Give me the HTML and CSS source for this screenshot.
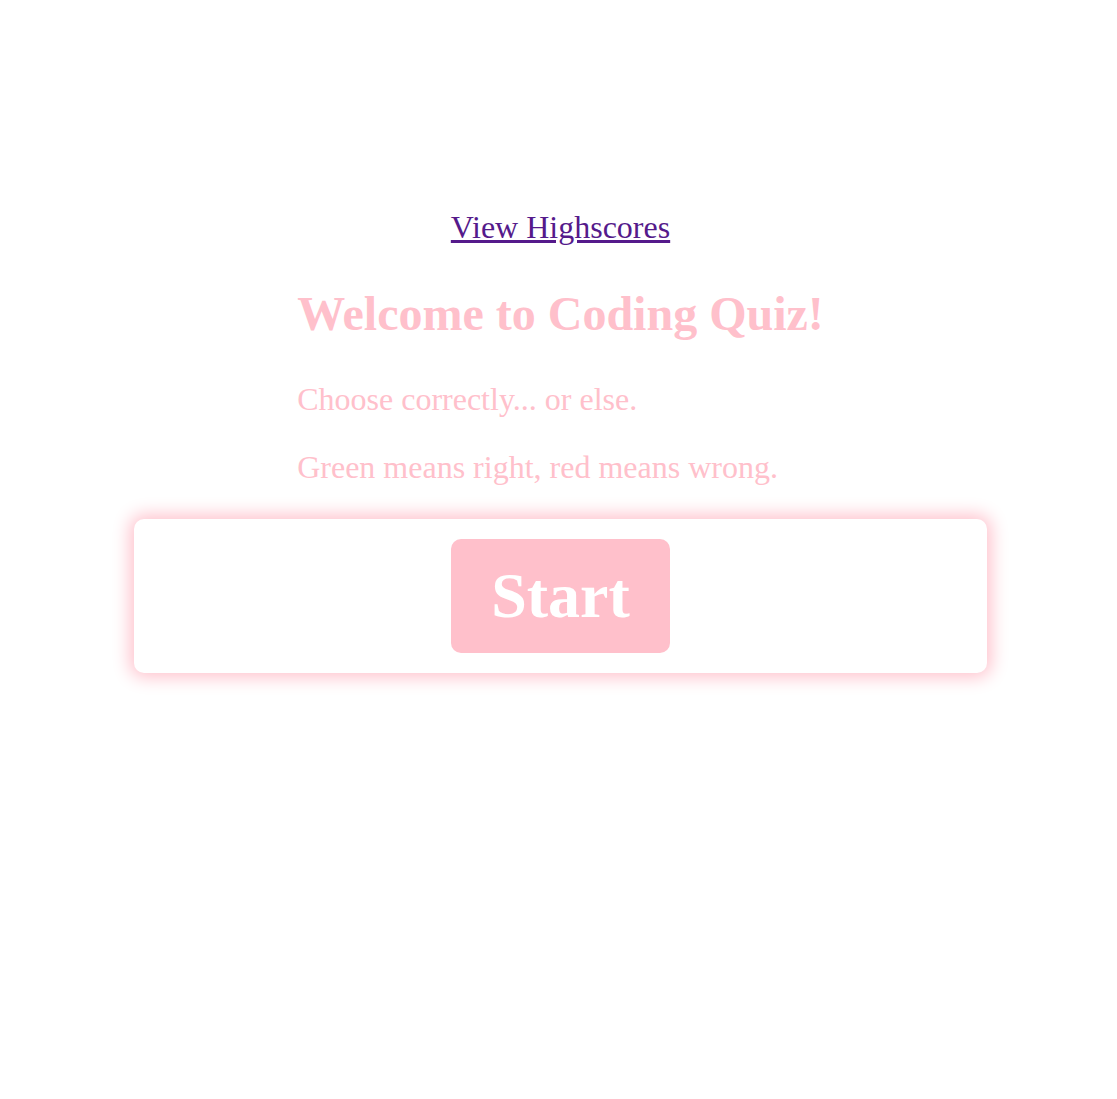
FILE: index.html
```html
<!DOCTYPE html>
<html lang="en">
<head>
<meta charset="utf-8">
<title>Coding Quiz</title>
<link rel="stylesheet" href="styles.css">
</head>
<body>
<header class="top">
  <a class="scores" href="#">View Highscores</a>
</header>
<main class="quiz">
  <div class="intro">
    <h1 class="title">Welcome to Coding Quiz!</h1>
    <p class="line">Choose correctly... or else.</p>
    <p class="line">Green means right, red means wrong.</p>
  </div>
  <div class="card">
    <button class="start" type="button">Start</button>
  </div>
</main>
</body>
</html>
```
FILE: styles.css
```css
html, body {
  background: #ffffff;
}
body {
  margin: 0;
  padding: 0 0 0 4px;
  min-height: 100vh;
  box-sizing: border-box;
  font-family: "Liberation Serif", "Times New Roman", serif;
}
.top {
  padding-top: 209px;
  text-align: center;
}
.scores {
  font-size: 32px;
  color: #551a8b;
  text-decoration: underline;
}
.quiz {
  display: flex;
  flex-direction: column;
  align-items: center;
  margin-top: 40px;
  padding-bottom: 60px;
}
.intro {
  color: #ffc0cb;
}
.title {
  font-size: 48px;
  font-weight: bold;
  margin: 0 0 40px;
}
.line {
  font-size: 32px;
  margin: 0 0 31px;
}
.line:last-child {
  margin-bottom: 0;
}
.card {
  margin-top: 33px;
  width: 853px;
  box-sizing: border-box;
  padding: 20px 0;
  display: flex;
  justify-content: center;
  background: #ffffff;
  border-radius: 10px;
  box-shadow: 0 0 18px 4px #ffc0cb;
}
.start {
  font-family: "Liberation Serif", "Times New Roman", serif;
  font-size: 64px;
  font-weight: bold;
  color: #ffffff;
  background: #ffc0cb;
  border: none;
  border-radius: 10px;
  padding: 20px 40px;
  line-height: normal;
  cursor: pointer;
}
```
